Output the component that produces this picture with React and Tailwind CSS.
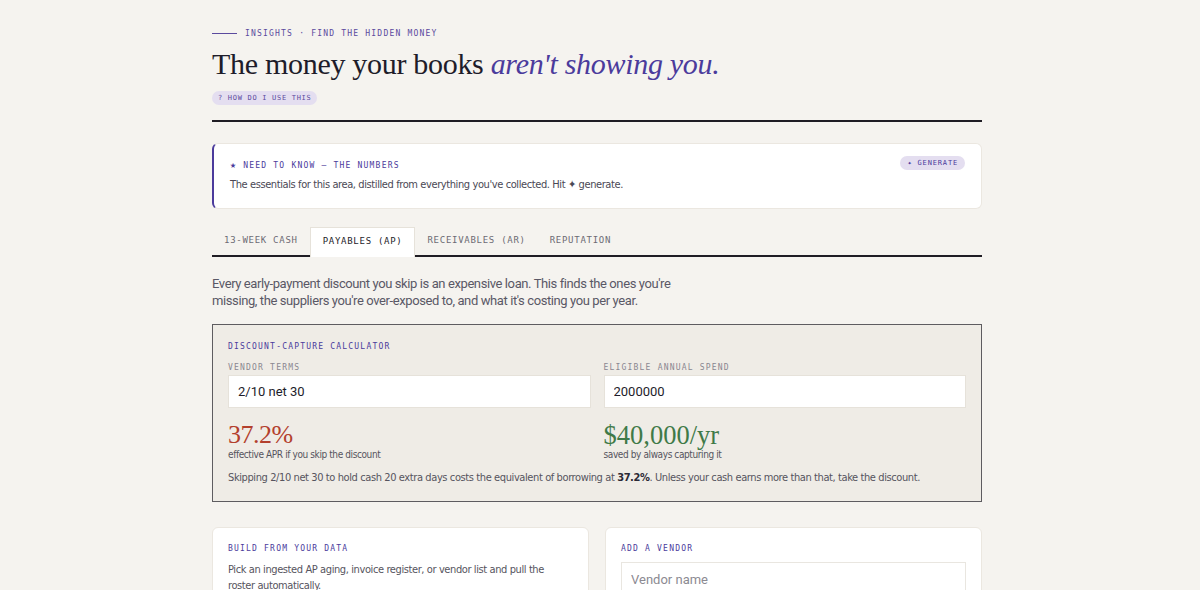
import { useMemo, useState } from "react";

const mono = "font-['DejaVu_Sans_Mono','Liberation_Mono',monospace]";
const serif = "font-['Liberation_Serif','DejaVu_Serif',serif]";
const narrow = "font-['Liberation_Sans_Narrow','DejaVu_Sans_Condensed',Roboto,sans-serif] tracking-[-0.4px]";
const sans = "font-['Roboto','Inter',sans-serif]";

const TABS = ["13-Week Cash", "Payables (AP)", "Receivables (AR)", "Reputation"];

const parseTerms = (terms) => {
  const m = terms.match(/(\d+(?:\.\d+)?)\s*\/\s*(\d+)\s*net\s*(\d+)/i);
  if (!m) return null;
  return { pct: Number(m[1]), disc: Number(m[2]), net: Number(m[3]) };
};

const Eyebrow = ({ children, className = "" }) => (
  <div className={`${mono} text-[8px] leading-[11px] uppercase tracking-[0.15em] ${className}`}>{children}</div>
);

const App = () => {
  const [tab, setTab] = useState(1);
  const [terms, setTerms] = useState("2/10 net 30");
  const [spend, setSpend] = useState("2000000");
  const [vendor, setVendor] = useState("");

  const calc = useMemo(() => {
    const t = parseTerms(terms);
    if (!t) return null;
    const days = t.net - t.disc;
    const apr = (t.pct / (100 - t.pct)) * (365 / days) * 100;
    const saved = (Number(spend) || 0) * (t.pct / 100);
    return { days, apr: apr.toFixed(1), saved: saved.toLocaleString("en-US") };
  }, [terms, spend]);

  return (
    <div className="min-h-screen bg-[#f5f3ef] text-[#1e1c2a]">
      <div className="w-[770px] ml-[212px] pt-[28px] pb-10">
        {/* Page header */}
        <div className="flex items-center gap-2">
          <span className="w-[25px] h-px bg-[#5b4a9e]" />
          <Eyebrow className="text-[#5b4a9e]">Insights · Find the hidden money</Eyebrow>
        </div>
        <h1 className={`${serif} text-[30px] leading-[36px] mt-[7px] tracking-[-0.01em]`}>
          The money your books <em className="text-[#4b3b9c]">aren't showing you.</em>
        </h1>
        <button className={`${mono} mt-[5px] h-[14px] px-[6px] rounded-full bg-[#e4def0] text-[#5b4a9e] text-[7px] uppercase tracking-[0.1em]`}>
          ? How do I use this
        </button>
        <div className="mt-[14px] h-[2px] bg-[#1f1d24]" />

        {/* Need to know */}
        <div className="mt-[21px] bg-white rounded-md border border-[#ebe7e0] border-l-2 border-l-[#4b3b9c] px-4 pt-[16px] pb-[16px]">
          <div className="flex items-start justify-between">
            <Eyebrow className="text-[#4b3b9c]">
              <span className="text-[10px] leading-none">★</span> Need to know — the numbers
            </Eyebrow>
            <button className={`${mono} -mt-[4px] h-[14px] px-[7px] rounded-full bg-[#e4def0] text-[#4b3b9c] text-[7px] uppercase tracking-[0.12em]`}>
              ✦ Generate
            </button>
          </div>
          <p className={`${narrow} text-[11px] leading-[14px] text-[#4a4855] mt-[7px]`}>
            The essentials for this area, distilled from everything you've collected. Hit ✦ generate.
          </p>
        </div>

        {/* Tabs */}
        <div className="mt-[18px] flex border-b-2 border-[#1f1d24]">
          {TABS.map((label, i) => (
            <button
              key={label}
              onClick={() => setTab(i)}
              className={`${mono} px-[12px] text-[9px] uppercase tracking-[0.08em] ${
                i === tab
                  ? "bg-white text-[#1e1c2a] border border-b-0 border-[#e6e2da] -mb-[2px] h-[30px] pb-[2px]"
                  : "h-[28px] text-[#6d6b74]"
              }`}
            >
              {label}
            </button>
          ))}
        </div>

        {/* Intro */}
        <p className={`${sans} mt-[18px] w-[480px] text-[13px] leading-[17px] text-[#5a5866] tracking-[-0.4px]`}>
          Every early-payment discount you skip is an expensive loan. This finds the ones you're
          missing, the suppliers you're over-exposed to, and what it's costing you per year.
        </p>

        {/* Calculator */}
        <div className="mt-[15px] bg-[#efece6] border border-[#5e5c60] px-[15px] pt-[16px] pb-[16px]">
          <Eyebrow className="text-[#4b3b9c] text-[7.5px]">Discount-capture calculator</Eyebrow>
          <div className="grid grid-cols-2 gap-x-[13px] mt-[10px]">
            <div>
              <Eyebrow className="text-[#8a8790] text-[7.5px]">Vendor terms</Eyebrow>
              <input
                value={terms}
                onChange={(e) => setTerms(e.target.value)}
                className={`${sans} mt-[2px] w-full h-[33px] bg-white border border-[#e6e2da] px-[9px] text-[13px] text-[#1e1c2a] outline-none`}
              />
            </div>
            <div>
              <Eyebrow className="text-[#8a8790] text-[7.5px]">Eligible annual spend</Eyebrow>
              <input
                value={spend}
                onChange={(e) => setSpend(e.target.value)}
                className={`${sans} mt-[2px] w-full h-[33px] bg-white border border-[#e6e2da] px-[9px] text-[13px] text-[#1e1c2a] outline-none`}
              />
            </div>
            <div className="mt-[15px]">
              <div className={`${serif} text-[26px] leading-[24px] text-[#b3402d] tracking-[-0.02em]`}>
                {calc ? `${calc.apr}%` : "—"}
              </div>
              <div className={`${narrow} text-[10px] leading-[13px] text-[#56545e] mt-[1px]`}>
                effective APR if you skip the discount
              </div>
            </div>
            <div className="mt-[15px]">
              <div className={`${serif} text-[26.5px] leading-[24px] text-[#3f7a48]`}>
                {calc ? `$${calc.saved}/yr` : "—"}
              </div>
              <div className={`${narrow} text-[10px] leading-[13px] text-[#56545e] mt-[1px]`}>
                saved by always capturing it
              </div>
            </div>
          </div>
          {calc && (
            <p className={`${narrow} mt-[10px] text-[11px] leading-[14px] text-[#56545e]`}>
              Skipping {terms} to hold cash {calc.days} extra days costs the equivalent of borrowing at{" "}
              <b className="text-[#2b2935]">{calc.apr}%</b>. Unless your cash earns more than that, take the discount.
            </p>
          )}
        </div>

        {/* Bottom cards */}
        <div className="mt-[25px] grid grid-cols-2 gap-x-[16px]">
          <div className="bg-white rounded-md border border-[#ebe7e0] px-[15px] pt-[15px] pb-4">
            <Eyebrow className="text-[#4b3b9c] text-[7.5px]">Build from your data</Eyebrow>
            <p className={`${narrow} mt-[8px] text-[11px] leading-[16px] text-[#56545e] w-[330px]`}>
              Pick an ingested AP aging, invoice register, or vendor list and pull the roster automatically.
            </p>
          </div>
          <div className="bg-white rounded-md border border-[#ebe7e0] px-[15px] pt-[15px] pb-4">
            <Eyebrow className="text-[#4b3b9c] text-[7.5px]">Add a vendor</Eyebrow>
            <input
              value={vendor}
              onChange={(e) => setVendor(e.target.value)}
              placeholder="Vendor name"
              className={`${sans} mt-[8px] w-full h-[34px] bg-white border border-[#e9e6e0] px-[9px] text-[13px] placeholder:text-[#8c8a92] outline-none`}
            />
          </div>
        </div>
      </div>
    </div>
  );
};

export default App;
